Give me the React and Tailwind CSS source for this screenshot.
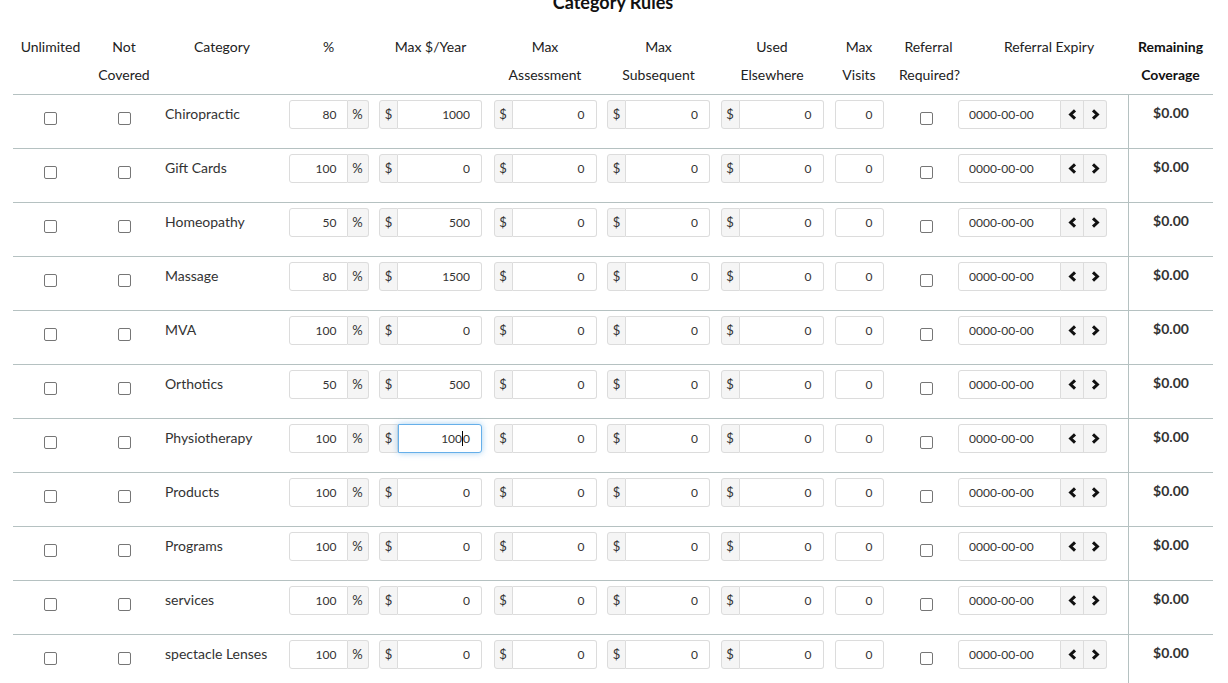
import React from 'react';

const rows = [
  { name: 'Chiropractic', pct: '80', max: '1000' },
  { name: 'Gift Cards', pct: '100', max: '0' },
  { name: 'Homeopathy', pct: '50', max: '500' },
  { name: 'Massage', pct: '80', max: '1500' },
  { name: 'MVA', pct: '100', max: '0' },
  { name: 'Orthotics', pct: '50', max: '500' },
  { name: 'Physiotherapy', pct: '100', max: '1000', focused: true },
  { name: 'Products', pct: '100', max: '0' },
  { name: 'Programs', pct: '100', max: '0' },
  { name: 'services', pct: '100', max: '0' },
  { name: 'spectacle Lenses', pct: '100', max: '0' },
];

const cols =
  'grid grid-cols-[75px_72px_124px_89px_115px_114px_113px_114px_60px_69px_170px_85px]';

const Box = () => (
  <span className="block w-[13px] h-[13px] rounded-[2px] border border-[#767676] bg-white" />
);

const Chevron = ({ left }) => (
  <svg width="9" height="11" viewBox="0 0 9 11">
    <polyline
      points={left ? '7,1.3 2.6,5.5 7,9.7' : '2,1.3 6.4,5.5 2,9.7'}
      fill="none"
      stroke="#111"
      strokeWidth="3"
    />
  </svg>
);

// $ addon + right aligned amount
const Money = ({ value, focused }) => (
  <div className="flex w-[103px] h-[29px]">
    <span className="w-[19px] flex items-center justify-center bg-[#f5f5f5] border border-[#dcdcdc] rounded-l-[3px] text-[13px]">
      $
    </span>
    {focused ? (
      <div className="flex-1 flex items-center justify-end pr-[11px] bg-white border border-[#66afe9] rounded-r-[3px] shadow-[0_0_6px_rgba(102,175,233,0.6)] text-[12px]">
        100<span className="w-px h-[15px] bg-black" />0
      </div>
    ) : (
      <input
        readOnly
        value={value}
        className="flex-1 min-w-0 bg-white border-y border-r border-[#dcdcdc] rounded-r-[3px] text-right pr-[11px] text-[12px] outline-none"
      />
    )}
  </div>
);

const Row = ({ r }) => (
  <div className={`${cols} h-[54px] border-t border-[#b5c1c1]`}>
    <div className="flex justify-center pt-[17px]"><Box /></div>
    <div className="flex justify-center pt-[17px]"><Box /></div>
    <div className="pl-[5px] pt-[10px] leading-[18px]">{r.name}</div>
    <div className="flex justify-center pt-[5px]">
      <div className="flex w-[80px] h-[29px]">
        <input
          readOnly
          value={r.pct}
          className="w-[59px] bg-white border border-[#dcdcdc] rounded-l-[3px] text-right pr-[10px] text-[12px] outline-none"
        />
        <span className="w-[21px] flex items-center justify-center bg-[#f5f5f5] border-y border-r border-[#dcdcdc] rounded-r-[3px] text-[13px]">
          %
        </span>
      </div>
    </div>
    <div className="flex justify-center pt-[5px]"><Money value={r.max} focused={r.focused} /></div>
    <div className="flex justify-center pt-[5px]"><Money value="0" /></div>
    <div className="flex justify-center pt-[5px]"><Money value="0" /></div>
    <div className="flex justify-center pt-[5px]"><Money value="0" /></div>
    <div className="flex justify-center pt-[5px]">
      <input
        readOnly
        value="0"
        className="w-[49px] h-[29px] bg-white border border-[#dcdcdc] rounded-[3px] text-right pr-[10px] text-[12px] outline-none"
      />
    </div>
    <div className="flex justify-center pl-[5px] pt-[17px]"><Box /></div>
    <div className="pt-[5px]">
      <div className="flex h-[29px]">
        <input
          readOnly
          value="0000-00-00"
          className="w-[103px] bg-white border border-[#dcdcdc] rounded-l-[3px] pl-[10px] text-[12px] outline-none"
        />
        <span className="w-[23px] flex items-center justify-center bg-[#f5f5f5] border-y border-r border-[#dcdcdc]">
          <Chevron left />
        </span>
        <span className="w-[23px] flex items-center justify-center bg-[#f5f5f5] border-y border-r border-[#dcdcdc] rounded-r-[3px]">
          <Chevron />
        </span>
      </div>
    </div>
    <div className="border-l border-[#b5c1c1] text-center font-bold pt-[9px] leading-[18px]">$0.00</div>
  </div>
);

export default function App() {
  return (
    <div className="bg-white min-h-screen font-['Lato',sans-serif] text-[14px] text-[#333] pl-[13px] overflow-hidden">
      <div className="w-[1200px]">
        <h2 className="-mt-[9px] h-[22px] leading-[22px] text-center text-[18px] font-bold text-[#111]">
          Category Rules
        </h2>
        <div className={`${cols} mt-[20px] h-[61px] leading-[28px] text-center text-[#222]`}>
          <div>Unlimited</div>
          <div>Not<br />Covered</div>
          <div>Category</div>
          <div>%</div>
          <div>Max $/Year</div>
          <div>Max<br />Assessment</div>
          <div>Max<br />Subsequent</div>
          <div>Used<br />Elsewhere</div>
          <div>Max<br />Visits</div>
          <div className="pl-[10px]">Referral<br />Required?</div>
          <div className="pl-[12px]">Referral Expiry</div>
          <div className="font-bold text-[#111]">Remaining<br />Coverage</div>
        </div>
        {rows.map((r) => (
          <Row key={r.name} r={r} />
        ))}
      </div>
    </div>
  );
}
